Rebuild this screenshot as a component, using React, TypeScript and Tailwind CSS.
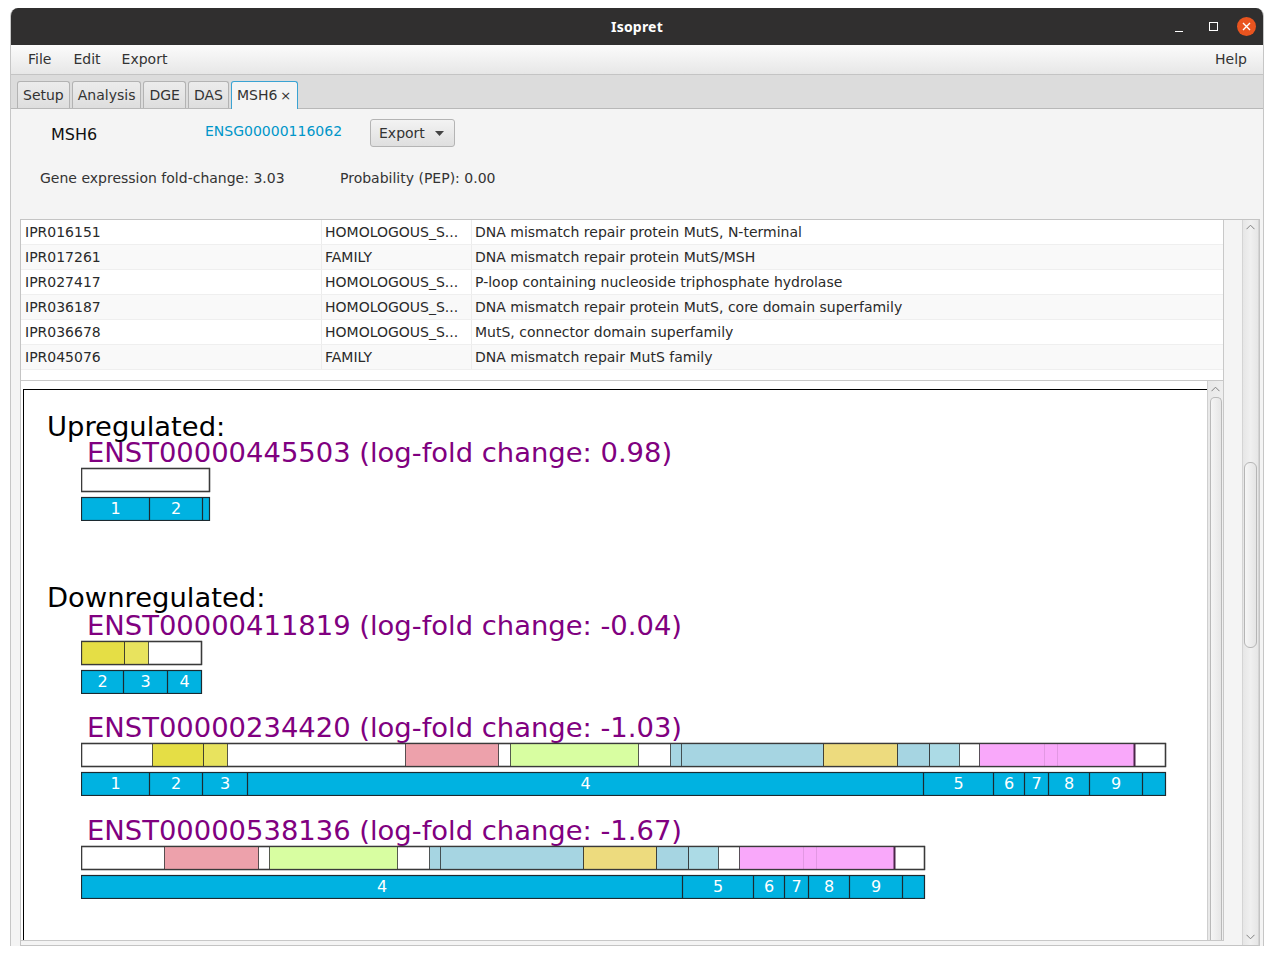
import React from 'react';

type Dom = { a: number; b: number; c: string; faint?: number[]; dark?: number[]; edge?: boolean };
type Blk = { title: string; end: number; doms: Dom[]; exons: number[]; labels: string[] };

const Y1 = '#e5de45';
const Y2 = '#e8e35e';
const PINK = '#eda1ab';
const GREEN = '#d8fea1';
const BLUE = '#a6d5e2';
const BLUE2 = '#acdbe6';
const TAN = '#eddb7e';
const MAG = '#f9a8fa';

const A: Blk = {
  title: 'ENST00000445503 (log-fold change: 0.98)',
  end: 209,
  doms: [],
  exons: [81, 149, 202, 209],
  labels: ['1', '2', ''],
};
const B: Blk = {
  title: 'ENST00000411819 (log-fold change: -0.04)',
  end: 201,
  doms: [
    { a: 81, b: 124, c: Y1 },
    { a: 124, b: 148, c: Y2 },
  ],
  exons: [81, 123, 167, 201],
  labels: ['2', '3', '4'],
};
const C: Blk = {
  title: 'ENST00000234420 (log-fold change: -1.03)',
  end: 1165,
  doms: [
    { a: 152, b: 203, c: Y1 },
    { a: 203, b: 227, c: Y2 },
    { a: 405, b: 498, c: PINK },
    { a: 510, b: 638, c: GREEN },
    { a: 670, b: 823, c: BLUE, dark: [681] },
    { a: 823, b: 897, c: TAN },
    { a: 897, b: 929, c: BLUE },
    { a: 929, b: 959, c: BLUE2 },
    { a: 979, b: 1134, c: MAG, faint: [1044, 1057], edge: true },
  ],
  exons: [81, 149, 202, 247, 923, 993, 1024, 1048, 1089, 1142, 1165],
  labels: ['1', '2', '3', '4', '5', '6', '7', '8', '9', ''],
};
const D: Blk = {
  title: 'ENST00000538136 (log-fold change: -1.67)',
  end: 924,
  doms: [
    { a: 164, b: 258, c: PINK },
    { a: 269, b: 397, c: GREEN },
    { a: 429, b: 583, c: BLUE, dark: [440] },
    { a: 583, b: 656, c: TAN },
    { a: 656, b: 688, c: BLUE },
    { a: 688, b: 718, c: BLUE2 },
    { a: 739, b: 894, c: MAG, faint: [803, 816], edge: true },
  ],
  exons: [81, 682, 753, 784, 808, 849, 902, 924],
  labels: ['4', '5', '6', '7', '8', '9', ''],
};

function Bars({ b }: { b: Blk }) {
  const X = 81;
  const w = b.end - X + 2;
  return (
    <svg width={w} height={55} className="block ml-[57px]">
      <g transform={`translate(${-X} 0)`}>
        <rect x={X + 0.5} y={2.5} width={b.end - X} height={23} fill="#ffffff" stroke="#3a3a3a" strokeWidth={1.3} />
        {b.doms.map((d, i) => (
          <g key={i}>
            <rect
              x={d.a + 0.5}
              y={2.5}
              width={d.b - d.a}
              height={23}
              fill={d.c}
              stroke="rgba(35,35,35,0.75)"
              strokeWidth={1}
            />
            {d.faint?.map((f) => (
              <line key={f} x1={f + 0.5} x2={f + 0.5} y1={3} y2={25} stroke="rgba(0,0,0,0.09)" strokeWidth={1} />
            ))}
            {d.dark?.map((f) => (
              <line key={f} x1={f + 0.5} x2={f + 0.5} y1={3} y2={25} stroke="rgba(35,35,35,0.75)" strokeWidth={1} />
            ))}
            {d.edge && <line x1={d.b + 0.5} x2={d.b + 0.5} y1={2.5} y2={25.5} stroke="#4a2648" strokeWidth={2} />}
          </g>
        ))}
        <rect x={X + 0.5} y={2.5} width={b.end - X} height={23} fill="none" stroke="#3a3a3a" strokeWidth={1.3} />
        <rect x={X + 0.5} y={31.5} width={b.end - X} height={23} fill="#00b2e1" stroke="#1c2a30" strokeWidth={1.2} />
        {b.exons.slice(1, -1).map((x) => (
          <line key={x} x1={x + 0.5} x2={x + 0.5} y1={31.5} y2={54.5} stroke="#1c2a30" strokeWidth={1.2} />
        ))}
        {b.labels.map((l, i) =>
          l ? (
            <text
              key={i}
              x={(b.exons[i] + b.exons[i + 1]) / 2 + 0.5}
              y={48}
              textAnchor="middle"
              fill="#ffffff"
              fontSize={16}
              fontFamily="'DejaVu Sans', sans-serif"
            >
              {l}
            </text>
          ) : null
        )}
      </g>
    </svg>
  );
}

function Block({ b, className }: { b: Blk; className?: string }) {
  return (
    <div className={className}>
      <div className="pl-[63px] h-[26px] leading-[26px] text-[27.4px] text-[#800080] whitespace-nowrap">{b.title}</div>
      <Bars b={b} />
    </div>
  );
}

function Chevron({ up }: { up: boolean }) {
  return (
    <svg width="9" height="6" viewBox="0 0 9 6">
      <path
        d={up ? 'M0.5 5.2 L4.5 1.2 L8.5 5.2' : 'M0.5 0.8 L4.5 4.8 L8.5 0.8'}
        fill="none"
        stroke="#808080"
        strokeWidth="1"
      />
    </svg>
  );
}

const rows: [string, string, string][] = [
  ['IPR016151', 'HOMOLOGOUS_S...', 'DNA mismatch repair protein MutS, N-terminal'],
  ['IPR017261', 'FAMILY', 'DNA mismatch repair protein MutS/MSH'],
  ['IPR027417', 'HOMOLOGOUS_S...', 'P-loop containing nucleoside triphosphate hydrolase'],
  ['IPR036187', 'HOMOLOGOUS_S...', 'DNA mismatch repair protein MutS, core domain superfamily'],
  ['IPR036678', 'HOMOLOGOUS_S...', 'MutS, connector domain superfamily'],
  ['IPR045076', 'FAMILY', 'DNA mismatch repair MutS family'],
];

const tabs = ['Setup', 'Analysis', 'DGE', 'DAS'];

export default function App() {
  return (
    <div className="w-[1274px] h-[955px] bg-white overflow-hidden font-['DejaVu_Sans',sans-serif] text-[#333333]">
      <div className="ml-[10px] mt-[8px] w-[1254px] h-[938px] flex flex-col rounded-t-[8px] overflow-hidden border-x border-[#c6c6c6] bg-[#f4f4f4]">
        {/* Title bar */}
        <div className="h-[37px] shrink-0 bg-[#302f2f] grid grid-cols-[1fr_auto_1fr] items-center">
          <div />
          <div className="text-white font-bold text-[14px] font-['Noto_Sans',sans-serif] tracking-[0.2px]">Isopret</div>
          <div className="flex justify-end items-center gap-[14px] pr-[7px]">
            <div className="w-[20px] h-[20px] flex items-end justify-center pb-[5px]">
              <div className="w-[8px] h-[1px] bg-white" />
            </div>
            <div className="w-[20px] h-[20px] flex items-center justify-center">
              <div className="w-[9px] h-[9px] border border-white" />
            </div>
            <div className="w-[19px] h-[19px] rounded-full bg-[#e9541f] flex items-center justify-center">
              <svg width="9" height="9" viewBox="0 0 9 9">
                <path d="M1 1 L8 8 M8 1 L1 8" stroke="#ffffff" strokeWidth="1.4" />
              </svg>
            </div>
          </div>
        </div>

        {/* Menu bar */}
        <div className="h-[30px] shrink-0 bg-linear-to-b from-[#fbfbfb] to-[#e7e7e7] border-b border-[#c4c4c4] flex items-center pl-[6px] pr-[6px] text-[14px] text-[#333333]">
          <span className="px-[11px]">File</span>
          <span className="px-[11px]">Edit</span>
          <span className="px-[10px]">Export</span>
          <span className="flex-1" />
          <span className="px-[10px]">Help</span>
        </div>

        {/* Tab bar */}
        <div className="h-[34px] shrink-0 bg-[#dcdcdc] border-b border-[#b8b8b8] flex items-end pl-[6px] gap-[2px] text-[14px]">
          {tabs.map((t) => (
            <div
              key={t}
              className="h-[27px] px-[5px] flex items-center border border-b-0 border-[#b3b3b3] rounded-t-[3px] bg-linear-to-b from-[#ececec] to-[#dedede] text-[#333333]"
            >
              {t}
            </div>
          ))}
          <div className="h-[28px] -mb-[1px] pl-[5px] pr-[6px] flex items-center border border-b-0 border-[#3aa3d3] rounded-t-[3px] bg-[#f4f4f4] text-[#333333]">
            MSH6<span className="ml-[3px] text-[13px]">×</span>
          </div>
        </div>

        {/* Content */}
        <div className="flex-1 flex flex-col min-h-0">
          <div className="mt-[10px] h-[28px] flex items-center pl-[40px] shrink-0">
            <div className="w-[154px] text-[16px] text-[#111111] mt-[3px]">MSH6</div>
            <div className="w-[165px] text-[14px] text-[#0096c9] mb-[4px]">ENSG00000116062</div>
            <div className="w-[85px] h-[28px] rounded-[3px] border border-[#b4b4b4] bg-linear-to-b from-[#f3f3f3] to-[#dfdfdf] flex items-center pl-[8px] text-[14px] text-[#333333]">
              Export
              <svg width="9" height="5" viewBox="0 0 9 5" className="ml-[10px]">
                <path d="M0 0 L9 0 L4.5 5 Z" fill="#444444" />
              </svg>
            </div>
          </div>
          <div className="mt-[21px] h-[20px] flex items-center pl-[29px] text-[14px] text-[#333333] shrink-0">
            <div className="w-[300px]">Gene expression fold-change: 3.03</div>
            <div>Probability (PEP): 0.00</div>
          </div>

          {/* Outer scroll pane */}
          <div className="mt-[31px] ml-[9px] mr-[3px] h-[727px] border border-[#c4c4c4] flex">
            <div className="w-[1203px] flex flex-col">
              {/* Table */}
              <div className="h-[161px] bg-white border-r border-b border-[#c8c8c8] flex flex-col text-[14px] text-[#2a2a2a]">
                {rows.map((r, i) => (
                  <div
                    key={r[0]}
                    className={`h-[25px] flex border-b border-[#efefef] ${i % 2 === 1 ? 'bg-[#f9f9f9]' : 'bg-white'}`}
                  >
                    <div className="w-[301px] pl-[4px] border-r border-[#ececec] flex items-center">{r[0]}</div>
                    <div className="w-[150px] pl-[3px] border-r border-[#ececec] flex items-center whitespace-nowrap">{r[1]}</div>
                    <div className="flex-1 pl-[3px] flex items-center whitespace-nowrap">{r[2]}</div>
                  </div>
                ))}
              </div>

              {/* Inner scroll pane */}
              <div className="h-[560px] flex border-r border-b border-[#c8c8c8] bg-white">
                <div className="flex-1 pt-[8px] pl-[2px] overflow-hidden flex flex-col">
                  <div className="flex-1 border-t border-l border-black bg-white pt-[24px] text-black">
                    <div className="pl-[23px] h-[26px] leading-[26px] text-[27.4px] whitespace-nowrap">Upregulated:</div>
                    <Block b={A} />
                    <div className="mt-[64px] pl-[23px] h-[28px] leading-[26px] text-[27.4px] whitespace-nowrap">Downregulated:</div>
                    <Block b={B} />
                    <Block b={C} className="mt-[21px]" />
                    <Block b={D} className="mt-[22px]" />
                  </div>
                </div>
                <div className="w-[16px] border-l border-[#cfcfcf] bg-linear-to-r from-[#e8e8e8] to-[#efefef] flex flex-col items-center">
                  <div className="h-[13px] flex items-center justify-center pt-[2px]">
                    <Chevron up />
                  </div>
                  <div className="mt-[3px] w-[12px] flex-1 rounded-t-[5px] border border-b-0 border-[#b9b9b9] bg-linear-to-r from-[#f5f5f5] to-[#e6e6e6]" />
                </div>
              </div>
              <div className="flex-1" />
            </div>
            <div className="w-[18px]" />
            <div className="w-[17px] flex flex-col items-center border-x border-[#d4d4d4] bg-linear-to-r from-[#e6e6e6] via-[#f0f0f0] to-[#e6e6e6]">
              <div className="h-[14px] flex items-center justify-center">
                <Chevron up />
              </div>
              <div className="mt-[228px] w-[13px] h-[186px] rounded-[6px] border border-[#b5b5b5] bg-linear-to-r from-[#f6f6f6] to-[#e4e4e4]" />
              <div className="flex-1" />
              <div className="h-[16px] flex items-center justify-center">
                <Chevron up={false} />
              </div>
            </div>
          </div>
        </div>
      </div>
    </div>
  );
}
